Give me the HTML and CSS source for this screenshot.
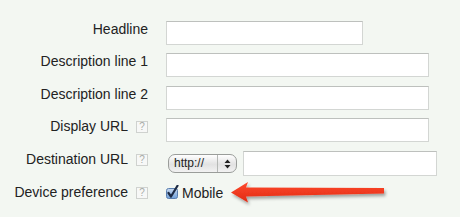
FILE: index.html
```html
<!DOCTYPE html>
<html lang="en">
<head>
  <meta charset="UTF-8">
  <title>Ad details</title>
  <link rel="stylesheet" href="styles.css">
</head>
<body>
  <form class="ad-form">
    <label class="label" for="headline">Headline</label>
    <div class="field"><input class="text short" type="text" id="headline"></div>

    <label class="label" for="desc1">Description line 1</label>
    <div class="field"><input class="text" type="text" id="desc1"></div>

    <label class="label" for="desc2">Description line 2</label>
    <div class="field"><input class="text" type="text" id="desc2"></div>

    <label class="label" for="display">Display URL <span class="help">?</span></label>
    <div class="field"><input class="text" type="text" id="display"></div>

    <label class="label" for="dest">Destination URL <span class="help">?</span></label>
    <div class="field dest">
      <div class="select">
        <span class="select-value">http://</span>
        <span class="select-arrows">
          <svg width="7" height="10" viewBox="0 0 7 10"><path d="M3.5 0.5 L6.5 4 L0.5 4 Z M0.5 6 L6.5 6 L3.5 9.5 Z" fill="#222"/></svg>
        </span>
      </div>
      <input class="text url" type="text" id="dest">
    </div>

    <label class="label">Device preference <span class="help">?</span></label>
    <div class="field device">
      <svg class="checkbox" width="14" height="14" viewBox="0 0 14 14">
        <defs>
          <linearGradient id="cb" x1="0" y1="0" x2="0" y2="1">
            <stop offset="0" stop-color="#c9daf0"/>
            <stop offset="1" stop-color="#6f9fd8"/>
          </linearGradient>
        </defs>
        <rect x="0.5" y="3.5" width="11" height="10" rx="2" fill="url(#cb)" stroke="#5a7fb0"/>
        <path d="M2.5 8 L5 11.5 L11.5 0.8" fill="none" stroke="#1c2a44" stroke-width="2.2" stroke-linecap="round" stroke-linejoin="round"/>
      </svg>
      <span class="mobile">Mobile</span>
    </div>
  </form>

  <!-- annotation arrow pointing at the checkbox -->
  <svg class="arrow" width="166" height="32" viewBox="0 0 166 32">
    <defs>
      <linearGradient id="red" x1="0" y1="0" x2="0" y2="1">
        <stop offset="0" stop-color="#ff4a2c"/>
        <stop offset="1" stop-color="#e02a14"/>
      </linearGradient>
      <filter id="shadow" x="-10%" y="-30%" width="120%" height="180%">
        <feDropShadow dx="1.5" dy="2.5" stdDeviation="1.5" flood-color="#000" flood-opacity="0.35"/>
      </filter>
    </defs>
    <polygon points="3,13.5 20,3 18,8.5 156,9 156,14.5 18,17.5 20,23.5" fill="url(#red)" filter="url(#shadow)"/>
  </svg>
</body>
</html>
```

FILE: styles.css
```css
* {
  box-sizing: border-box;
}

body {
  margin: 0;
  background-color: #f3f7f2;
  font-family: 'Liberation Sans', Arial, sans-serif;
  font-size: 14px;
  color: #222;
  position: relative;
  height: 217px;
  overflow: hidden;
}

.ad-form {
  display: grid;
  grid-template-columns: 148px auto;
  grid-template-rows: 32px 33px 32px 33px 33px auto;
  column-gap: 18px;
  padding-top: 21px;
}

.label {
  display: flex;
  justify-content: flex-end;
  align-items: flex-start;
  line-height: 17px;
  white-space: nowrap;
}

.help {
  display: inline-block;
  width: 12px;
  height: 12px;
  margin-left: 8px;
  margin-top: 3px;
  border: 1px solid #cfd2cf;
  background-color: #f7f8f7;
  color: #a8aca8;
  font-size: 10px;
  line-height: 10px;
  text-align: center;
}

.field {
  display: flex;
  align-items: flex-start;
}

.text {
  width: 263px;
  height: 24px;
  margin: 0;
  border: 1px solid #d3d6d3;
  border-top-color: #bdc0bd;
  background-color: #fff;
}

.text.short {
  width: 197px;
}

.dest {
  align-items: center;
  height: 25px;
}

.select {
  display: flex;
  align-items: center;
  width: 69px;
  height: 19px;
  margin-left: 2px;
  border: 1px solid #9a9d9a;
  border-radius: 7px;
  background: linear-gradient(#ffffff, #e2e2e2 55%, #f2f2f2);
  font-size: 12px;
  line-height: 17px;
}

.select-value {
  flex: 1;
  padding-left: 5px;
}

.select-arrows {
  display: flex;
  align-items: center;
  justify-content: center;
  width: 19px;
  height: 100%;
  border-left: 1px solid #b5b8b5;
}

.url {
  width: 194px;
  height: 25px;
  margin-left: 6px;
}

.device {
  align-items: flex-end;
  height: 18px;
}

.checkbox {
  margin-bottom: 3px;
}

.mobile {
  margin-left: 2px;
  line-height: 17px;
}

.arrow {
  position: absolute;
  left: 228px;
  top: 179px;
}
```
